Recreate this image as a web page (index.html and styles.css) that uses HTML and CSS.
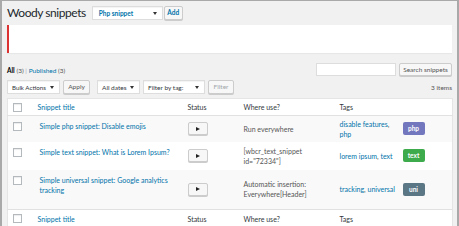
FILE: index.html
```html
<!DOCTYPE html>
<html>
<head>
<meta charset="utf-8">
<link rel="stylesheet" href="styles.css">
</head>
<body>
<div class="frame">
  <div class="head">
    <h1 class="title">Woody snippets</h1>
    <div class="select sel-type"><span>Php snippet</span><i class="caret"></i></div>
    <button class="btn btn-add">Add</button>
  </div>
  <div class="notice"></div>
  <div class="topbar">
    <div class="subsub"><b class="current">All</b> <span class="count">(3)</span> <span class="sep">|</span> <a class="link">Published</a> <span class="count">(3)</span></div>
    <div class="search">
      <div class="search-input"></div>
      <button class="btn btn-search">Search snippets</button>
    </div>
  </div>
  <div class="tablenav">
    <div class="actions">
      <div class="select sel-bulk"><span>Bulk Actions</span><i class="caret"></i></div>
      <button class="btn btn-apply">Apply</button>
      <div class="select sel-dates"><span>All dates</span><i class="caret"></i></div>
      <div class="select sel-tag"><span>Filter by tag:</span><i class="caret"></i></div>
      <button class="btn btn-filter">Filter</button>
    </div>
    <div class="items">3 items</div>
  </div>
  <table class="list">
    <colgroup>
      <col class="c-cb"><col class="c-title"><col class="c-status"><col class="c-where"><col class="c-tags"><col class="c-type">
    </colgroup>
    <thead>
      <tr>
        <th class="cb"><span class="check"></span></th>
        <th class="th-link">Snippet title</th>
        <th>Status</th>
        <th>Where use?</th>
        <th>Tags</th>
        <th></th>
      </tr>
    </thead>
    <tbody>
      <tr class="alt r1">
        <td class="cb"><span class="check"></span></td>
        <td class="name">Simple php snippet: Disable emojis</td>
        <td class="mid"><button class="play"><i class="tri"></i></button></td>
        <td class="mid where">Run everywhere</td>
        <td class="mid tags"><a class="link">disable features</a>,<br><a class="link">php</a></td>
        <td class="mid"><span class="badge php">php</span></td>
      </tr>
      <tr class="r2">
        <td class="cb"><span class="check"></span></td>
        <td class="name">Simple text snippet: What is Lorem Ipsum?</td>
        <td class="mid"><button class="play"><i class="tri"></i></button></td>
        <td class="mid where">[wbcr_text_snippet<br>id="72334"]</td>
        <td class="mid tags"><a class="link">lorem ipsum</a>, <a class="link">text</a></td>
        <td class="mid"><span class="badge text">text</span></td>
      </tr>
      <tr class="alt r3">
        <td class="cb"><span class="check"></span></td>
        <td class="name">Simple universal snippet: Google analytics tracking</td>
        <td class="mid"><button class="play"><i class="tri"></i></button></td>
        <td class="mid where">Automatic insertion:<br>Everywhere[Header]</td>
        <td class="mid tags"><a class="link">tracking</a>, <a class="link">universal</a></td>
        <td class="mid"><span class="badge uni">uni</span></td>
      </tr>
    </tbody>
    <tfoot>
      <tr>
        <th class="cb"><span class="check"></span></th>
        <th class="th-link">Snippet title</th>
        <th>Status</th>
        <th>Where use?</th>
        <th>Tags</th>
        <th></th>
      </tr>
    </tfoot>
  </table>
</div>
</body>
</html>
```
FILE: styles.css
```css
* { box-sizing: border-box; }
html, body { margin: 0; padding: 0; }
body { font-family: Lato, "Open Sans", sans-serif; font-size: 7px; color: #555; }

.frame {
  width: 459px;
  height: 226px;
  overflow: hidden;
  background: #f1f1f1;
  border: 1px solid #a9a9a9;
  border-left-width: 2px;
  border-right-width: 2px;
  border-bottom: 0;
  padding: 0 5px;
}

.head { display: flex; align-items: center; height: 18px; margin-top: 3px; }
.title { margin: 0; font-size: 12px; line-height: 18px; font-weight: 400; color: #23282d; letter-spacing: -0.45px; }

.select {
  position: relative;
  display: flex;
  align-items: center;
  height: 14px;
  background: #fff;
  border: 1px solid #ddd;
  box-shadow: inset 0 1px 1px rgba(0,0,0,0.05);
  padding: 0 4px;
  color: #32373c;
  font-size: 6.5px;
  white-space: nowrap;
}
.caret {
  position: absolute;
  right: 5px;
  top: 5px;
  width: 0; height: 0;
  border-left: 2px solid transparent;
  border-right: 2px solid transparent;
  border-top: 3px solid #333;
}
.sel-type { width: 71px; margin-left: 6px; color: #0073aa; font-weight: 700; }
.sel-type span { padding-left: 2px; }

.btn {
  height: 14px;
  padding: 0 4px;
  background: #f7f7f7;
  border: 1px solid #ccc;
  box-shadow: 0 1px 0 #ccc;
  border-radius: 2px;
  font-family: inherit;
  font-size: 6.5px;
  color: #555;
  line-height: 12px;
  white-space: nowrap;
}
.btn-add { margin-left: 1px; width: 19px; padding: 0; color: #0073aa; font-weight: 700; }

.notice {
  margin-top: 3px;
  height: 28px;
  background: #fff;
  border-left: 2px solid #dc3232;
  box-shadow: 0 1px 1px rgba(0,0,0,0.04);
}

.topbar { display: flex; justify-content: space-between; align-items: flex-end; height: 14px; margin-top: 9px; }
.subsub { font-size: 6.5px; line-height: 9px; padding-bottom: 1px; color: #ccc; }
.current { color: #000; font-weight: 700; }
.count { color: #555; }
.sep { color: #aaa; }
.link { color: #0073aa; }
.search { display: flex; gap: 3px; }
.search-input { width: 80px; height: 13px; background: #fff; border: 1px solid #ddd; }
.btn-search { height: 13px; width: 53px; padding: 0; }

.tablenav { display: flex; justify-content: space-between; align-items: center; height: 14px; margin-top: 4px; }
.actions { display: flex; align-items: center; }
.sel-bulk { width: 53px; font-size: 6.2px; }
.btn-apply { width: 27px; margin-left: 3px; padding: 0; }
.sel-dates { width: 43px; margin-left: 7px; }
.sel-tag { width: 62px; margin-left: 3px; }
.btn-filter { width: 26px; margin-left: 3px; padding: 0; color: #a0a5aa; }
.items { font-size: 6.5px; color: #555; }

.list {
  margin-top: 4px;
  width: 100%;
  table-layout: fixed;
  border-collapse: collapse;
  background: #fff;
  border: 1px solid #e5e5e5;
}
.c-cb { width: 24px; }
.c-title { width: 150px; }
.c-status { width: 56px; }
.c-where { width: 96px; }
.c-tags { width: 63px; }
.c-type { width: 56px; }

.list th, .list td { padding: 0 0 0 6px; text-align: left; font-weight: 400; vertical-align: top; }
.list th { height: 17px; vertical-align: middle; color: #32373c; font-size: 7px; }
.list thead th { border-bottom: 1px solid #e1e1e1; }
.list tfoot th { border-top: 1px solid #e1e1e1; height: 18px; }
.list .th-link { color: #0073aa; }
.list .cb { padding-left: 5px; }

.check { display: block; width: 9px; height: 9px; background: #fff; border: 1px solid #b4b9be; box-shadow: inset 0 1px 1px rgba(0,0,0,0.08); }
.list td.cb { padding-top: 6px; }

.alt { background: #f9f9f9; }
.r1 td { height: 26px; }
.r2 td { height: 28px; }
.r3 td { height: 40px; }

.name { color: #0073aa; font-weight: 700; font-size: 7px; line-height: 10px; padding-top: 5px !important; padding-left: 8px !important; }
.mid { vertical-align: middle !important; }
.where { color: #555; line-height: 10px; }
.tags { line-height: 10px; color: #555; }

.play {
  display: flex; align-items: center; justify-content: center;
  width: 20px; height: 13px; padding: 0;
  background: #f7f7f7; border: 1px solid #ccc; border-radius: 2px;
  box-shadow: 0 1px 0 #ccc;
}
.tri { width: 0; height: 0; border-top: 2.5px solid transparent; border-bottom: 2.5px solid transparent; border-left: 4px solid #222; }

.badge {
  display: inline-block; width: 22px; height: 13px; line-height: 13px;
  text-align: center; color: #fff; font-weight: 700; font-size: 6.5px; border-radius: 2px;
}
.php { background: #7377bd; }
.text { background: #3daa4c; }
.uni { background: #5b7685; }
```
